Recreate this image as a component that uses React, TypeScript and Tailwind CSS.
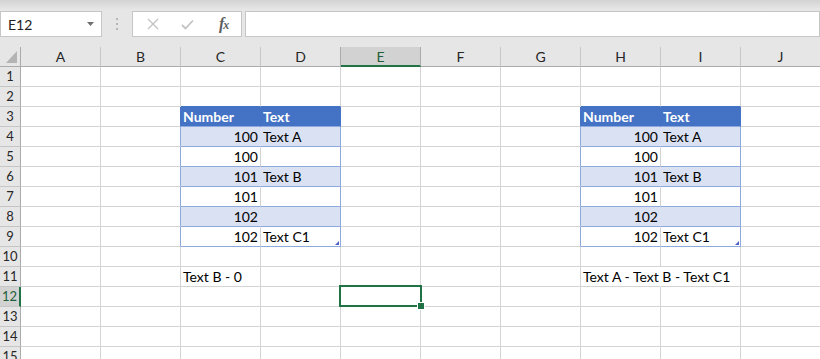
import React from "react";

const COLS = ["A", "B", "C", "D", "E", "F", "G", "H", "I", "J"];
const ROWS = Array.from({ length: 15 }, (_, i) => i + 1);

type Cell = { text: string; right?: boolean; head?: boolean };

const DATA: Record<string, Cell> = {
  C3: { text: "Number", head: true },
  D3: { text: "Text", head: true },
  C4: { text: "100", right: true },
  D4: { text: "Text A" },
  C5: { text: "100", right: true },
  C6: { text: "101", right: true },
  D6: { text: "Text B" },
  C7: { text: "101", right: true },
  C8: { text: "102", right: true },
  C9: { text: "102", right: true },
  D9: { text: "Text C1" },
  C11: { text: "Text B - 0" },
  H11: { text: "Text A - Text B - Text C1" },
};

// second table is the same as the first
["3", "4", "5", "6", "7", "8", "9"].forEach((r) => {
  if (DATA["C" + r]) DATA["H" + r] = DATA["C" + r];
  if (DATA["D" + r]) DATA["I" + r] = DATA["D" + r];
});

const firstCol = (c: number) => c === 2 || c === 7;
const secondCol = (c: number) => c === 3 || c === 8;
const beforeTable = (c: number) => c === 1 || c === 6;

function cellClass(r: number, c: number) {
  const inRows = r >= 3 && r <= 9;
  const inTable = inRows && (firstCol(c) || secondCol(c));
  const head = inTable && r === 3;
  const band = inTable && (r === 4 || r === 6 || r === 8);

  let bg = "";
  if (head) bg = "bg-[#4472c4] text-white font-bold";
  else if (band) bg = "bg-[#d9e1f2]";

  let br = "border-r-[#d4d4d4]";
  if (inTable && firstCol(c)) {
    if (head) br = "border-r-[#4472c4]";
    else if (band) br = "border-r-[#d9e1f2]";
  } else if (inTable && secondCol(c)) {
    br = head ? "border-r-[#4472c4]" : "border-r-[#8ea9db]";
  } else if (inRows && beforeTable(c)) {
    br = r === 3 ? "border-r-[#4472c4]" : "border-r-[#8ea9db]";
  }
  if (r === 11 && c === 7) br = "border-r-white";

  let bb = "border-b-[#d4d4d4]";
  if (firstCol(c) || secondCol(c)) {
    if (r === 2) bb = "border-b-[#4472c4]";
    else if (inRows) bb = "border-b-[#8ea9db]";
  }
  return `${bg} ${br} ${bb}`;
}

function FormulaBar() {
  return (
    <div className="h-[47px] flex items-start bg-gradient-to-b from-[#d3d3d3] via-[#e6e6e6] via-20% to-[#e6e6e6]">
      <div className="mt-[11px] h-[26px] w-[102px] bg-white border border-[#c6c6c6] flex items-center justify-between pl-[7px] pr-[7px] text-[14px] text-[#222]">
        <span>E12</span>
        <svg width="7" height="4" viewBox="0 0 7 4">
          <path d="M0 0 L7 0 L3.5 4 Z" fill="#6f6f6f" />
        </svg>
      </div>
      <div className="mt-[18px] ml-[14px] w-[2px] flex flex-col gap-[3px]">
        <div className="h-[2px] w-[2px] bg-[#b5b5b5]" />
        <div className="h-[2px] w-[2px] bg-[#b5b5b5]" />
        <div className="h-[2px] w-[2px] bg-[#b5b5b5]" />
      </div>
      <div className="mt-[11px] ml-[14px] h-[26px] w-[110px] bg-white border border-[#c6c6c6] flex items-center pl-[14px]">
        <svg width="12" height="12" viewBox="0 0 12 12">
          <path d="M1 1 L11 11 M11 1 L1 11" stroke="#c3c3c3" strokeWidth="1.4" />
        </svg>
        <svg className="ml-[22px]" width="13" height="11" viewBox="0 0 13 11">
          <path d="M1 6 L4.5 9.5 L12 1.5" stroke="#c3c3c3" strokeWidth="1.8" fill="none" />
        </svg>
        <span className="ml-[25px] text-[16px] leading-none italic font-bold text-[#5f5f5f] font-['Liberation_Serif',serif] tracking-[-1px]">
          f<span className="text-[12px]">x</span>
        </span>
      </div>
      <div className="mt-[11px] ml-[3px] h-[26px] flex-1 bg-white border border-[#c6c6c6]" />
    </div>
  );
}

function Sheet() {
  return (
    <div className="grid grid-cols-[21px_repeat(10,80px)] auto-rows-[20px] bg-white text-[14px] text-black">
      <div className="relative bg-[#e6e6e6] border-r border-b border-r-[#ababab] border-b-[#ababab]">
        <svg className="absolute right-[3px] bottom-[3px]" width="11" height="12" viewBox="0 0 11 12">
          <path d="M11 0 L11 12 L0 12 Z" fill="#b4b4b4" />
        </svg>
      </div>
      {COLS.map((c, i) =>
        c === "E" ? (
          <div
            key={c}
            className="bg-[#d2d2d2] border-r border-r-[#ababab] border-b-2 border-b-[#217346] flex items-center justify-center text-[#1e5e39]"
          >
            {c}
          </div>
        ) : (
          <div
            key={c}
            className={`bg-[#e6e6e6] border-r border-b border-b-[#ababab] flex items-center justify-center text-[#262626] ${
              i === 3 ? "border-r-[#ababab]" : "border-r-[#c6c6c6]"
            }`}
          >
            {c}
          </div>
        )
      )}
      {ROWS.map((r) => (
        <React.Fragment key={r}>
          {r === 12 ? (
            <div className="bg-[#d2d2d2] border-r-2 border-b border-r-[#217346] border-b-[#c6c6c6] flex items-center justify-center text-[#1e5e39] text-[13px]">
              {r}
            </div>
          ) : (
            <div className="bg-[#e6e6e6] border-r border-b border-r-[#ababab] border-b-[#c6c6c6] flex items-center justify-center text-[#262626] text-[13px]">
              {r}
            </div>
          )}
          {COLS.map((c, ci) => {
            const cell = DATA[c + r];
            return (
              <div
                key={c + r}
                className={`relative border-r border-b flex items-end pb-[1px] whitespace-nowrap ${cellClass(r, ci)} ${
                  cell?.right ? "justify-end pr-[2px]" : "pl-[2px]"
                }`}
              >
                {cell && <span className="leading-[17px]">{cell.text}</span>}
                {r === 9 && (ci === 3 || ci === 8) && (
                  <svg className="absolute right-[1px] bottom-[1px]" width="4" height="4" viewBox="0 0 4 4">
                    <path d="M4 0 L4 4 L0 4 Z" fill="#4a5fbf" />
                  </svg>
                )}
                {r === 12 && c === "E" && (
                  <div className="absolute z-10 -left-[2px] -top-[2px] w-[83px] h-[22px] border-2 border-[#217346]">
                    <div className="absolute -right-[5px] -bottom-[5px] w-[8px] h-[8px] bg-[#217346] border border-white" />
                  </div>
                )}
              </div>
            );
          })}
        </React.Fragment>
      ))}
    </div>
  );
}

export default function App() {
  return (
    <div className="w-[820px] h-[359px] overflow-hidden bg-[#e6e6e6] font-['Lato','Noto_Sans',sans-serif] text-[14px]">
      <FormulaBar />
      <Sheet />
    </div>
  );
}
